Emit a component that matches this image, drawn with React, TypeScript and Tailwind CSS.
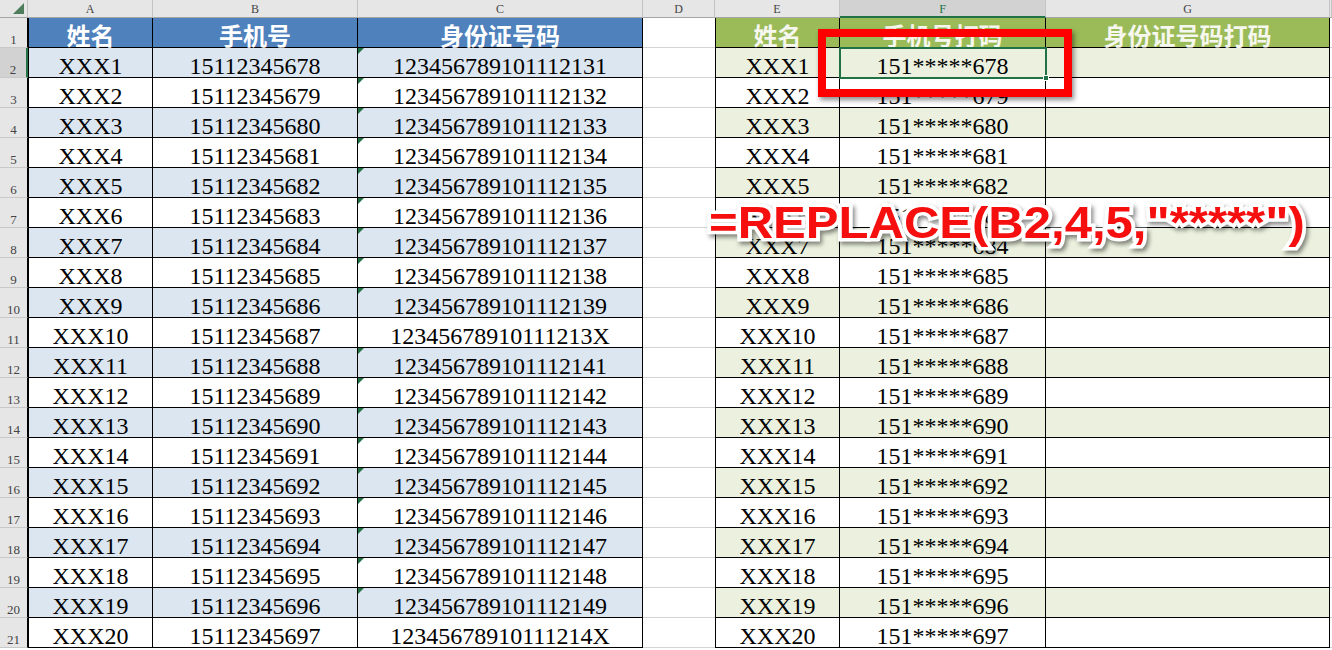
import clsx from 'clsx'

const letters = ['A', 'B', 'C', 'D', 'E', 'F', 'G', '']

const people = Array.from({ length: 20 }, (_, k) => {
  const i = k + 1
  const phone = String(15112345678 + k)
  return {
    name: 'XXX' + i,
    phone,
    masked: '151*****' + phone.slice(-3),
    id: '1234567891011121' + (i <= 10 ? '3' : '4') + (i % 10 === 0 ? 'X' : String(i % 10)),
  }
})

function ColHead({ label, active }: { label: string; active?: boolean }) {
  return (
    <div
      className={clsx(
        'flex justify-center border-r border-r-[#c4c4c4] pt-[2px] text-[12px] leading-[14px]',
        active ? 'border-b-2 border-b-[#217346] bg-[#d2d2d2] text-[#217346]' : 'border-b border-b-[#a5a5a5] bg-[#e6e6e6] text-[#444]'
      )}
    >
      {label}
    </div>
  )
}

function RowHead({ n }: { n: number }) {
  return (
    <div
      className={clsx(
        'flex items-end justify-center border-b border-b-[#c8c8c8] pb-[1px] text-[13px] leading-[13px] text-[#444]',
        n === 2 ? 'border-r-2 border-r-[#217346] bg-[#d2d2d2]' : 'border-r border-r-black bg-[#e6e6e6]'
      )}
    >
      {n}
    </div>
  )
}

function Head({ text, tone, first }: { text: string; tone: 'blue' | 'green'; first?: boolean }) {
  return (
    <div
      className={clsx(
        "flex justify-center border-r border-b border-black pt-[3px] font-['Noto_Sans_CJK_SC',sans-serif] text-[24px] font-bold leading-[27px]",
        tone === 'blue' ? 'bg-[#4f81bd] text-white' : 'bg-[#9bbb59] text-[#f6f7ee]',
        first && 'border-l'
      )}
    >
      {text}
    </div>
  )
}

function Cell({ text, bg, first, tri }: { text: string; bg: string; first?: boolean; tri?: boolean }) {
  return (
    <div className={clsx('relative flex justify-center border-r border-b border-black pt-[5px] text-[24px] leading-[26px] text-black', bg, first && 'border-l')}>
      {tri && <span className="absolute top-0 left-0 h-[6px] w-[6px] bg-[#1f7244] [clip-path:polygon(0_0,100%_0,0_100%)]" />}
      {text}
    </div>
  )
}

function Blank() {
  return <div className="border-b border-b-[#d4d4d4] bg-white" />
}

export default function App() {
  return (
    <div className="relative h-[650px] w-[1332px] overflow-hidden bg-white font-['Liberation_Serif',serif]">
      <div className="grid grid-cols-[28px_125px_205px_285px_72px_125px_206px_284px_1fr] grid-rows-[18px_repeat(21,30px)]">
        <div className="relative border-r border-b border-r-[#c4c4c4] border-b-[#a5a5a5] bg-[#e6e6e6]">
          <span className="absolute right-[3px] bottom-[3px] h-[11px] w-[11px] bg-[#4e7d5c] [clip-path:polygon(100%_0,100%_100%,0_100%)]" />
        </div>
        {letters.map((l) => (
          <ColHead key={l || 'H'} label={l} active={l === 'F'} />
        ))}

        <RowHead n={1} />
        <Head text="姓名" tone="blue" first />
        <Head text="手机号" tone="blue" />
        <Head text="身份证号码" tone="blue" />
        <Blank />
        <Head text="姓名" tone="green" first />
        <Head text="手机号打码" tone="green" />
        <Head text="身份证号码打码" tone="green" />
        <Blank />

        {people.map((p, k) => {
          const band = k % 2 === 0
          const blue = band ? 'bg-[#dce6f1]' : 'bg-white'
          const green = band ? 'bg-[#ebf1de]' : 'bg-white'
          return (
            <div key={p.name} className="contents">
              <RowHead n={k + 2} />
              <Cell text={p.name} bg={blue} first />
              <Cell text={p.phone} bg={blue} />
              <Cell text={p.id} bg={blue} tri={!p.id.endsWith('X')} />
              <Blank />
              <Cell text={p.name} bg={green} first />
              <Cell text={p.masked} bg={green} />
              <Cell text="" bg={green} />
              <Blank />
            </div>
          )
        })}
      </div>

      {/* selected cell F2 */}
      <div className="pointer-events-none absolute top-[47px] left-[839px] h-[32px] w-[208px] border-2 border-[#217346]">
        <span className="absolute -right-[4px] -bottom-[4px] h-[6px] w-[6px] border border-white bg-[#217346]" />
      </div>

      {/* red highlight box */}
      <div className="pointer-events-none absolute top-[29px] left-[818px] h-[68px] w-[254px] border-[8px] border-[#fe0000] shadow-[2px_3px_5px_rgba(0,0,0,0.45)]" />

      {/* formula caption */}
      <div className="pointer-events-none absolute top-[200px] left-[709px] origin-left scale-x-[1.09] whitespace-nowrap font-['Liberation_Sans',sans-serif] text-[45px] leading-[45px] font-bold text-[#f50f0f] [-webkit-text-stroke:7px_white] [paint-order:stroke_fill] [filter:drop-shadow(2px_3px_2px_rgba(0,0,0,0.45))]">
        {'=REPLACE(B2,4,5,"*****")'}
      </div>
    </div>
  )
}
